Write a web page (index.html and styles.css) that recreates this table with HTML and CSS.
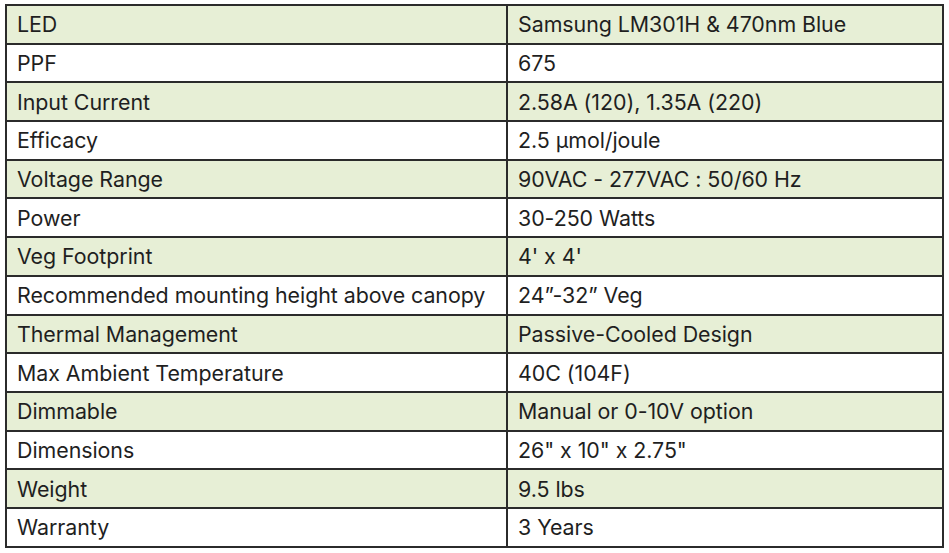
FILE: index.html
```html
<!DOCTYPE html>
<html>
<head>
<meta charset="utf-8">
<link rel="stylesheet" href="styles.css">
</head>
<body>
<table class="spec">
  <colgroup><col class="c1"><col class="c2"></colgroup>
  <tr class="alt"><td>LED</td><td>Samsung LM301H &amp; 470nm Blue</td></tr>
  <tr><td>PPF</td><td>675</td></tr>
  <tr class="alt"><td>Input Current</td><td>2.58A (120), 1.35A (220)</td></tr>
  <tr><td>Efficacy</td><td>2.5 μmol/joule</td></tr>
  <tr class="alt"><td>Voltage Range</td><td>90VAC - 277VAC : 50/60 Hz</td></tr>
  <tr><td>Power</td><td>30-250 Watts</td></tr>
  <tr class="alt"><td>Veg Footprint</td><td>4' x 4'</td></tr>
  <tr><td>Recommended mounting height above canopy</td><td>24”-32” Veg</td></tr>
  <tr class="alt"><td>Thermal Management</td><td>Passive-Cooled Design</td></tr>
  <tr><td>Max Ambient Temperature</td><td>40C (104F)</td></tr>
  <tr class="alt"><td>Dimmable</td><td>Manual or 0-10V option</td></tr>
  <tr><td>Dimensions</td><td>26" x 10" x 2.75"</td></tr>
  <tr class="alt"><td>Weight</td><td>9.5 lbs</td></tr>
  <tr><td>Warranty</td><td>3 Years</td></tr>
</table>
</body>
</html>
```
FILE: styles.css
```css
html, body {
  margin: 0;
  padding: 0;
  background: #ffffff;
}
.spec {
  margin: 4px 0 0 5px;
  border-collapse: collapse;
  width: 937px;
  table-layout: fixed;
  font-family: "Inter", "Open Sans", "Liberation Sans", sans-serif;
  font-size: 21.4px;
  letter-spacing: -0.05px;
  color: #1f1f1f;
  border: 2px solid #2b2b2b;
}
.c1 { width: 501px; }
.c2 { width: 436px; }
.spec td {
  border: 2px solid #2b2b2b;
  height: 36.7px;
  padding: 0 0 0 10px;
  line-height: 24px;
  white-space: nowrap;
  vertical-align: middle;
}
.spec tr.alt td {
  background: #e7efd6;
}
```
